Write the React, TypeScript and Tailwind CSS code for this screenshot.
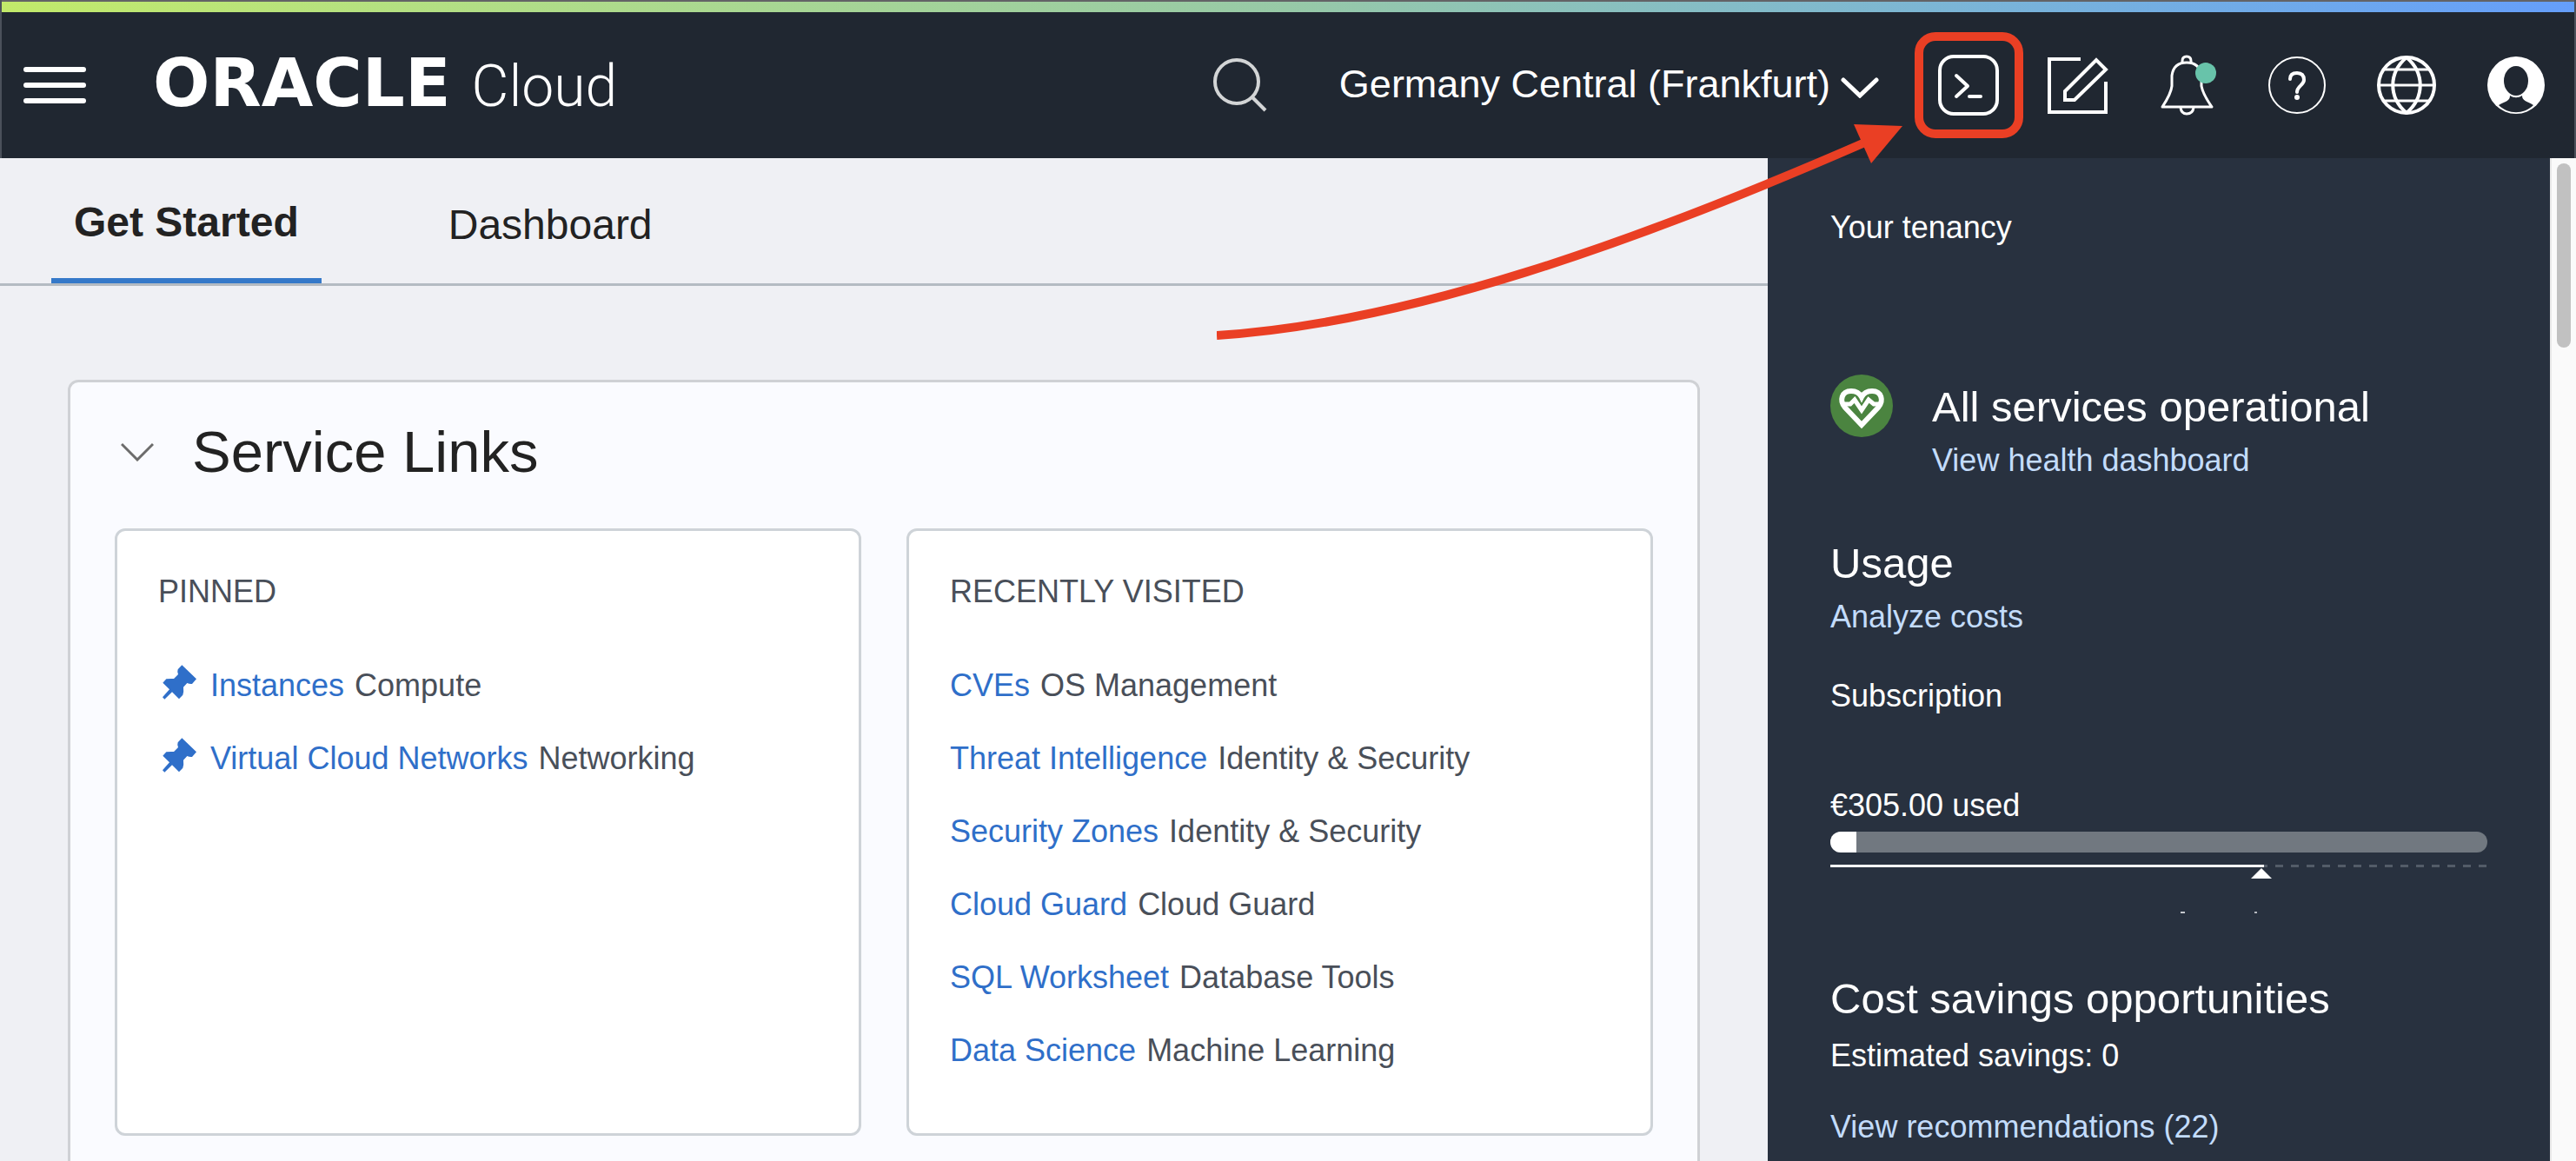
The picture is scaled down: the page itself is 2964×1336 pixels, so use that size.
import type { ReactNode } from "react";

type ServiceLink = { name: string; area: string };

const pinned: ServiceLink[] = [
  { name: "Instances", area: "Compute" },
  { name: "Virtual Cloud Networks", area: "Networking" },
];

const recent: ServiceLink[] = [
  { name: "CVEs", area: "OS Management" },
  { name: "Threat Intelligence", area: "Identity & Security" },
  { name: "Security Zones", area: "Identity & Security" },
  { name: "Cloud Guard", area: "Cloud Guard" },
  { name: "SQL Worksheet", area: "Database Tools" },
  { name: "Data Science", area: "Machine Learning" },
];

function PinIcon() {
  return (
    <svg viewBox="30 34 120 120" className="h-10 w-10 shrink-0" fill="#2f6fc9" aria-hidden="true">
      <path d="M100 35 L150 83 L135 100 Q126 101 118 97 L105 111 Q107 126 103 138 L90 152 L66 128 L40 153 L33 146 L57 119 L34 96 L46 83 Q60 81 72 82 L87 67 Q83 58 86 50 Z" />
    </svg>
  );
}

function HealthIcon() {
  return (
    <svg viewBox="0 0 72 72" className="h-[72px] w-[72px] shrink-0" aria-hidden="true">
      <circle cx="36" cy="36" r="36" fill="#4b8440" />
      <path
        d="M36 58 L17 38 C10 30 13 19 24 19 C30 19 34 22 36 26 C38 22 42 19 48 19 C59 19 62 30 55 38 Z"
        fill="none"
        stroke="#fff"
        strokeWidth="6"
      />
      <path d="M14 34 H23 L28 29 L36 41 L44 29 L50 34 H58" fill="none" stroke="#fff" strokeWidth="5" />
    </svg>
  );
}

function HeaderButton({ label, children }: { label: string; children: ReactNode }) {
  return (
    <button type="button" aria-label={label} className="flex h-full w-[126px] items-center justify-center">
      {children}
    </button>
  );
}

/* Outlines the Cloud Shell button and points an arrow at it. */
function Callout() {
  return (
    <div className="pointer-events-none absolute inset-0 flex items-center justify-center">
      <div className="h-[122px] w-[125px] rounded-3xl border-[10px] border-[#ea3f24]" />
      <svg viewBox="0 0 802 260" className="absolute top-[124px] right-full h-[260px] w-[802px]" aria-hidden="true">
        <path d="M0 248 C220 234 480 142 748 25" fill="none" stroke="#ea3f24" strokeWidth="10" />
        <path d="M733 5 L789 7 L753 50 Z" fill="#ea3f24" />
      </svg>
    </div>
  );
}

function Header() {
  return (
    <header className="relative z-10 shrink-0 border-x-2 border-[#4b515b] bg-[#202731] text-white">
      <div className="h-[2px] bg-[#636366]" />
      <div className="h-3 bg-linear-to-r from-[#c2ea6a] via-[#97c9a7] to-[#659efb]" />
      <div className="flex h-[168px] items-center pr-1 pl-[25px]">
        <button type="button" aria-label="Open navigation menu" className="flex w-[72px] flex-col gap-3">
          <span className="h-[6px] rounded-full bg-white" />
          <span className="h-[6px] rounded-full bg-white" />
          <span className="h-[6px] rounded-full bg-white" />
        </button>
        <a href="#home" aria-label="Oracle Cloud" className="ml-[77px] flex items-baseline gap-6">
          <span className="font-['DejaVu_Sans',sans-serif] text-[77px] leading-[80px] font-bold">ORACLE</span>
          <span className="font-['Roboto',sans-serif] text-[66px] leading-[80px] font-light">Cloud</span>
        </a>
        <div className="ml-auto flex h-full items-center">
          <button type="button" aria-label="Search">
            <svg viewBox="0 0 62 62" className="h-[62px] w-[62px]" fill="none" stroke="#d3d5d6" strokeWidth="4" aria-hidden="true">
              <circle cx="27" cy="27" r="25" />
              <path d="M45 45 L60 60" />
            </svg>
          </button>
          <button type="button" className="ml-[83px] flex items-center gap-3 pb-[2px] text-[45px] leading-[60px]">
            Germany Central (Frankfurt)
            <svg viewBox="0 0 44 24" className="mt-2 h-6 w-11" fill="none" stroke="#fff" strokeWidth="5" strokeLinecap="round" aria-hidden="true">
              <path d="M3 3 L22 21 L41 3" />
            </svg>
          </button>
          <div className="ml-10 flex h-full items-center">
            <div className="relative h-full">
              <HeaderButton label="Cloud Shell">
                <svg viewBox="0 0 70 70" className="h-[70px] w-[70px]" fill="none" stroke="#fff" aria-hidden="true">
                  <rect x="2" y="2" width="66" height="66" rx="16" strokeWidth="4" />
                  <path d="M21 24 L34 36 L21 48 M36 48 H49" strokeWidth="4" strokeLinecap="round" strokeLinejoin="round" />
                </svg>
              </HeaderButton>
              <Callout />
            </div>
            <HeaderButton label="Code Editor">
              <svg viewBox="0 0 70 66" className="h-[66px] w-[70px]" fill="none" stroke="#fff" strokeWidth="4" aria-hidden="true">
                <path d="M38 3 H2 V64 H67 V29" />
                <path d="M20 40 L56 4 L67 15 L31 50 H20 Z" />
              </svg>
            </HeaderButton>
            <HeaderButton label="Announcements">
              <svg viewBox="0 0 66 70" className="ml-1 h-[70px] w-[66px]" fill="none" stroke="#fff" strokeWidth="3" strokeLinejoin="round" aria-hidden="true">
                <path d="M25 10 V7 Q25 2 30 2 Q35 2 35 7 V10" />
                <path d="M2 60 Q12 45 13 36 V24 Q15 9 30 9 Q45 9 47 24 V36 Q49 46 59 60 Z" />
                <path d="M23 61 Q24 68 30 68 Q37 68 38 61" />
                <circle cx="52" cy="21" r="12" fill="#68c3aa" stroke="none" />
              </svg>
            </HeaderButton>
            <HeaderButton label="Help">
              <svg viewBox="0 0 66 66" className="h-[66px] w-[66px]" fill="none" stroke="#fff" aria-hidden="true">
                <circle cx="33" cy="33" r="32" strokeWidth="2" />
                <path d="M25 26 Q25 19 33 19 Q41 19 41 27 C41 33 33 34 33 41" strokeWidth="4" strokeLinecap="round" />
                <circle cx="33" cy="47" r="3" fill="#fff" stroke="none" />
              </svg>
            </HeaderButton>
            <HeaderButton label="Language">
              <svg viewBox="0 0 70 70" className="h-[70px] w-[70px]" fill="none" stroke="#fff" strokeWidth="4" aria-hidden="true">
                <circle cx="35" cy="35" r="32" />
                <path d="M35 3 C14 21 14 49 35 67 M35 3 C56 21 56 49 35 67" />
                <path d="M9 17 H61 M3 35 H67 M9 53 H61" strokeWidth="3" />
              </svg>
            </HeaderButton>
            <HeaderButton label="Profile">
              <svg viewBox="0 0 66 66" className="h-[66px] w-[66px]" aria-hidden="true">
                <circle cx="33" cy="33" r="33" fill="#fff" />
                <ellipse cx="33" cy="28" rx="14" ry="17" fill="#202731" />
                <path d="M13 56 C22 51 26 51 26 45 C31 48 35 48 40 45 C40 51 45 51 53 56 C42 67 24 67 13 56 Z" fill="#202731" />
              </svg>
            </HeaderButton>
          </div>
        </div>
      </div>
    </header>
  );
}

function LinkCard({ title, links, showPin }: { title: string; links: ServiceLink[]; showPin?: boolean }) {
  return (
    <section className="rounded-xl border-[3px] border-[#ced3d8] bg-white px-[47px] pt-10 pb-[53px] text-[36px] text-[#494f59]">
      <h3 className="leading-[60px]">{title}</h3>
      <ul className="mt-9">
        {links.map((link) => (
          <li key={link.name} className="flex items-center gap-3 leading-[84px]">
            {showPin && (
              <span className="mr-1 ml-1 pb-2">
                <PinIcon />
              </span>
            )}
            <a href="#service" className="text-[#2f6fc9]">
              {link.name}
            </a>
            <span>{link.area}</span>
          </li>
        ))}
      </ul>
    </section>
  );
}

function Sidebar() {
  return (
    <aside className="w-[900px] shrink-0 bg-[#28313f] px-[72px] pt-[50px] text-[36px] leading-[60px] text-white">
      <p>Your tenancy</p>
      <div className="mt-[139px] flex gap-[45px]">
        <HealthIcon />
        <div className="pt-[5px]">
          <h2 className="text-[49px] leading-[64px]">All services operational</h2>
          <a href="#health" className="block text-[#c3dcfb]">
            View health dashboard
          </a>
        </div>
      </div>
      <h2 className="mt-14 text-[49px] leading-[64px]">Usage</h2>
      <a href="#costs" className="block text-[#c3dcfb]">
        Analyze costs
      </a>
      <p className="mt-[31px]">Subscription</p>
      <p className="mt-[66px]">€305.00 used</p>
      <div className="flex h-6 overflow-hidden rounded-full bg-[#717880]">
        <div className="w-[4%] bg-white" />
      </div>
      <div className="mt-[14px] flex h-[3px]">
        <div className="flex w-[66%] justify-end bg-white">
          <svg viewBox="0 0 24 16" className="-mr-[9px] h-4 w-6 shrink-0" fill="#fff" aria-hidden="true">
            <path d="M0 16 L12 4 L24 16 Z" />
          </svg>
        </div>
        <div className="flex-1 bg-[repeating-linear-gradient(90deg,#535c68_0_4px,transparent_4px_13px,#535c68_13px_18px)]" />
      </div>
      <div className="mt-[51px] flex h-[2px]">
        <span className="ml-[403px] w-[5px] bg-[#c5c8cd]" />
        <span className="ml-[80px] w-[3px] bg-[#b5b9bf]" />
      </div>
      <h2 className="mt-[66px] text-[49px] leading-[64px]">Cost savings opportunities</h2>
      <p className="mt-1">Estimated savings: 0</p>
      <a href="#recommendations" className="mt-[22px] block text-[#c3dcfb]">
        View recommendations (22)
      </a>
    </aside>
  );
}

export default function App() {
  return (
    <div className="flex h-screen flex-col overflow-hidden bg-[#eff0f4] font-['Liberation_Sans',Arial,sans-serif] whitespace-nowrap">
      <Header />
      <div className="flex min-h-0 flex-1">
        <main className="flex-1">
          <nav className="flex h-[147px] gap-[120px] border-b-[3px] border-[#b4bbc2] pl-[59px] text-[48px] text-[#222]">
            <button type="button" className="border-b-[6px] border-[#3579c9] px-[26px] pt-[9px] font-bold">
              Get Started
            </button>
            <button type="button" className="px-[26px] pt-[9px]">
              Dashboard
            </button>
          </nav>
          <section className="mx-[78px] mt-[108px] min-h-[1000px] rounded-xl border-[3px] border-[#cfd1d5] bg-[#fafbff] px-[51px] pt-10">
            <div className="flex items-center gap-11 pl-[7px]">
              <button type="button" aria-label="Collapse Service Links">
                <svg viewBox="0 0 38 22" className="h-[22px] w-[38px]" fill="none" stroke="#6c6c6c" strokeWidth="3" aria-hidden="true">
                  <path d="M1 2 L19 20 L37 2" />
                </svg>
              </button>
              <h2 className="text-[67px] leading-[80px] text-[#222]">Service Links</h2>
            </div>
            <div className="mt-12 grid grid-cols-2 gap-[52px]">
              <LinkCard title="PINNED" links={pinned} showPin />
              <LinkCard title="RECENTLY VISITED" links={recent} />
            </div>
          </section>
        </main>
        <Sidebar />
        <div className="w-[30px] shrink-0 border-l-2 border-[#e8e8e8] bg-[#fafafa] px-[6px] pt-[6px]" aria-hidden="true">
          <div className="h-[212px] w-4 rounded-full bg-[#c1c1c1]" />
        </div>
      </div>
    </div>
  );
}
